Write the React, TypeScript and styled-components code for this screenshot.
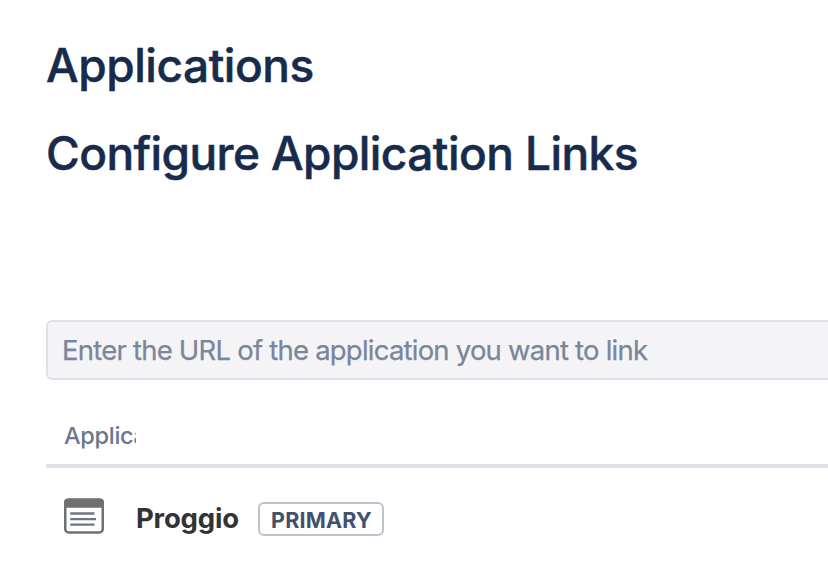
import React from "react";
import styled, { createGlobalStyle } from "styled-components";

const GlobalStyle = createGlobalStyle`
  body { margin: 0; background: #fff; overflow: hidden; }
  * { box-sizing: border-box; }
`;
const Page = styled.main`
  width: 100%;
  height: 576px;
  padding: 37px 0 0 46px;
  overflow: hidden;
  background: #fff;
  font-family: Inter, sans-serif;
`;
const Heading = styled.h1<{ $tracking: number }>`
  height: 56px;
  margin: 0 0 32px;
  font-size: 46px;
  font-weight: 500;
  line-height: 56px;
  letter-spacing: ${(p) => p.$tracking}px;
  -webkit-text-stroke: 0.5px #172b4d;
  white-space: nowrap;
  color: #172b4d;
`;
const UrlField = styled.input`
  display: block;
  width: 900px;
  height: 60px;
  margin: 139px 0 0;
  padding: 0 14px;
  border: 2px solid #dfe1e6;
  border-radius: 6px;
  background: #f4f4f7;
  font: 400 27.5px Inter, sans-serif;
  letter-spacing: -0.78px;
  -webkit-text-stroke: 0.25px #7a869a;
  color: #7a869a;
  &::placeholder { color: #7a869a; opacity: 1; }
`;
const TableHeader = styled.div`
  height: 88px;
  padding: 41px 0 0 18px;
  border-bottom: 4px solid #dfe1e6;
`;
const ColumnLabel = styled.div`
  width: 72px;
  overflow: hidden;
  font-size: 23.5px;
  font-weight: 500;
  line-height: 30px;
  letter-spacing: -0.3px;
  white-space: nowrap;
  color: #6b778c;
`;
const AppRow = styled.div`
  display: flex;
  align-items: flex-start;
  height: 100px;
  padding: 30px 0 0 18px;
`;
const AppName = styled.span`
  width: 154px;
  padding-left: 32px;
  font-size: 27.5px;
  font-weight: 700;
  line-height: 40px;
  letter-spacing: -0.2px;
  color: #333;
`;
const Lozenge = styled.span`
  display: flex;
  align-items: center;
  justify-content: center;
  width: 126px;
  height: 34px;
  margin-top: 4px;
  padding: 1px 0 0 1px;
  border: 2px solid #bcc3cc;
  border-radius: 6px;
  font-size: 21.5px;
  font-weight: 700;
  letter-spacing: 0.2px;
  color: #42526e;
`;

const ApplicationIcon = () => (
  <svg width="40" height="36" viewBox="0 0 40 36" fill="none">
    <rect x="1.25" y="1.7" width="37.5" height="32.7" rx="3.5" stroke="#707070" strokeWidth="2.5" />
    <path d="M0 9.7V4.5a4 4 0 0 1 4-4h32a4 4 0 0 1 4 4v5.2z" fill="#707070" />
    <path d="M6.2 15.5h24.3M6.2 21.2h25.8M6.2 26.7h24.3" stroke="#707486" strokeWidth="2.3" />
  </svg>
);

export default function App() {
  return (
    <Page>
      <GlobalStyle />
      <Heading $tracking={-0.45}>Applications</Heading>
      <Heading $tracking={-0.57}>Configure Application Links</Heading>
      <UrlField placeholder="Enter the URL of the application you want to link" />
      <TableHeader>
        <ColumnLabel>Application</ColumnLabel>
      </TableHeader>
      <AppRow>
        <ApplicationIcon />
        <AppName>Proggio</AppName>
        <Lozenge>PRIMARY</Lozenge>
      </AppRow>
    </Page>
  );
}
